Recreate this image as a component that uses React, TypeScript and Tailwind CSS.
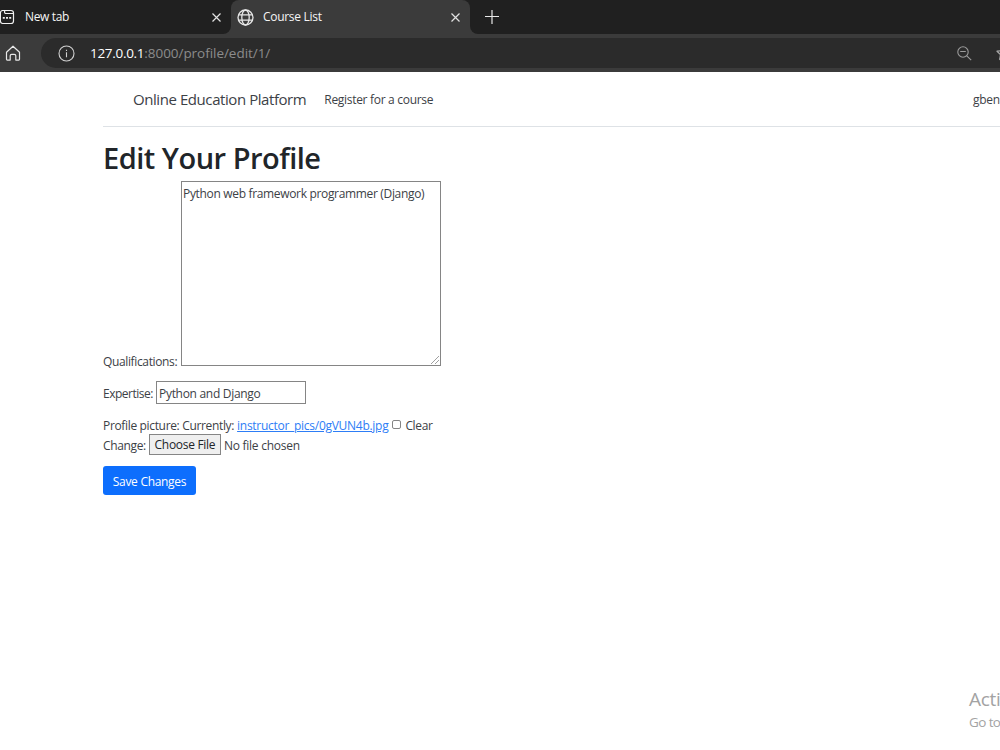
import type { ReactNode } from "react";

// ─── Icons ──────────────────────────────────────────────────────────────────

function NewTabIcon() {
  return (
    <svg className="shrink-0" width="15" height="16" viewBox="0 0 15 16" fill="none" stroke="#f0f0f0" strokeWidth="1.2" aria-hidden="true">
      <path d="M2.5 1.5H11A2.5 2.5 0 0 1 13.5 4v8a2.5 2.5 0 0 1-2.5 2.5H2.5A2.500 2.500 0 0 1 .4 12V4A2.500 2.500 0 0 1 2.500 1.500ZM4.600 1.500v1.800a1.200 1.200 0 0 0 1.200 1.200h7.700" />
      <path d="M2.800 8.800h2M6 8.800h2M9.200 8.800h2" strokeWidth="1.800" />
    </svg>
  );
}

function GlobeIcon() {
  return (
    <svg className="shrink-0" width="17" height="17" viewBox="0 0 17 17" fill="none" stroke="#e6e6e6" strokeWidth="1.3" aria-hidden="true">
      <circle cx="8.5" cy="8.5" r="7.5" />
      <ellipse cx="8.5" cy="8.5" rx="3.7" ry="7.5" />
      <path d="M1.700 5.800h13.600M1.700 11.200h13.600" />
    </svg>
  );
}

function CloseIcon() {
  return (
    <svg width="9" height="9" viewBox="0 0 9 9" fill="none" stroke="#e2e2e2" strokeWidth="1.2" aria-hidden="true">
      <path d="M.5.5l8 8M8.5.5l-8 8" />
    </svg>
  );
}

function PlusIcon() {
  return (
    <svg width="14" height="14" viewBox="0 0 14 14" fill="none" stroke="#e8e8e8" strokeWidth="1.2" aria-hidden="true">
      <path d="M7 0v14M0 6.5h14" />
    </svg>
  );
}

function HomeIcon() {
  return (
    <svg className="shrink-0" width="16" height="17" viewBox="0 0 16 17" fill="none" stroke="#e8e8e8" strokeWidth="1.2" strokeLinejoin="round" aria-hidden="true">
      <path d="M1.500 7.300 8 1.200l6.500 6.100v7a.8.8 0 0 1-.8.8h-2.900v-4.300a1.500 1.500 0 0 0-1.500-1.500H6.700a1.500 1.500 0 0 0-1.500 1.500v4.300H2.300a.8.8 0 0 1-.8-.8Z" />
    </svg>
  );
}

function InfoIcon() {
  return (
    <svg className="shrink-0" width="17" height="17" viewBox="0 0 17 17" fill="none" stroke="#d0d0d0" strokeWidth="1.1" aria-hidden="true">
      <circle cx="8.5" cy="8.5" r="7.5" />
      <path d="M8.500 7.300v5M8.500 4.700v1.300" />
    </svg>
  );
}

function ZoomOutIcon() {
  return (
    <svg width="15" height="15" viewBox="0 0 15 15" fill="none" stroke="#9b9b9b" strokeWidth="1.1" aria-hidden="true">
      <circle cx="6" cy="6" r="5.2" />
      <path d="M3.200 5.500h5.600M9.800 9.800l4.400 4.400" />
    </svg>
  );
}

function StarIcon() {
  return (
    <svg width="16" height="16" viewBox="0 0 16 16" fill="none" stroke="#a8a8a8" strokeWidth="1.2" strokeLinejoin="round" aria-hidden="true">
      <path d="m8 1 2.100 4.500 4.900.7-3.500 3.400.8 4.900L8 12.200l-4.300 2.300.8-4.900L1 6.200l4.900-.7Z" />
    </svg>
  );
}

// ─── Browser chrome ─────────────────────────────────────────────────────────

function TabStrip() {
  return (
    <div className="flex h-[34px] bg-[#3b3b3b] text-[12px] text-[#f5f5f5]">
      <div className="flex w-[231px] shrink-0 items-center rounded-br-lg bg-[#202020] pr-[10px]">
        <NewTabIcon />
        <span className="ml-[10px] tracking-[-0.35px]">New tab</span>
        <span className="ml-auto">
          <CloseIcon />
        </span>
      </div>
      <div className="w-[239px] shrink-0 bg-[#202020]">
        <div className="flex h-full items-center rounded-t-lg bg-[#3b3b3b] pl-[6px] pr-[10px]">
          <GlobeIcon />
          <span className="ml-[9px] tracking-[-0.3px]">Course List</span>
          <span className="ml-auto">
            <CloseIcon />
          </span>
        </div>
      </div>
      <div className="flex grow items-center rounded-bl-lg bg-[#202020] pl-[15px]">
        <PlusIcon />
      </div>
    </div>
  );
}

function AddressBar() {
  return (
    <div className="flex h-[38px] items-center overflow-hidden bg-[#3b3b3b] pl-[5px]">
      <HomeIcon />
      <div className="ml-5 flex h-[30px] w-[959px] shrink-0 items-center rounded-l-full bg-[#2b2b2b] pl-[17px]">
        <InfoIcon />
        <span className="ml-[15px] text-[13.5px] tracking-[-0.04px] text-[#8c8c8c]">
          <span className="tracking-[-0.3px] text-white">127.0.0.1</span>:8000/profile/edit/1/
        </span>
        <span className="ml-auto">
          <ZoomOutIcon />
        </span>
        <span className="ml-6 mr-[-12px]">
          <StarIcon />
        </span>
      </div>
    </div>
  );
}

// ─── Page ───────────────────────────────────────────────────────────────────

function SiteNav() {
  return (
    <nav className="flex h-[55px] items-center border-b border-[#dee2e6] pl-[30px] text-[#3c4146]">
      <a href="#" className="text-[15px] tracking-[-0.43px]">
        Online Education Platform
      </a>
      <a href="#" className="ml-[18px] pt-[2px] text-[12px] tracking-[-0.3px]">
        Register for a course
      </a>
      <span className="ml-auto w-[27px] pt-[2px] text-[12px] tracking-[-0.3px]">gben</span>
    </nav>
  );
}

function Row({ label, children }: Readonly<{ label: ReactNode; children: ReactNode }>) {
  return (
    <div className="flex items-end">
      {label}
      {children}
    </div>
  );
}

function ProfileForm() {
  return (
    <form className="text-[12px] leading-[18px] text-[#3c4146]">
      <div className="mt-[5px]">
        <Row
          label={
            <label htmlFor="qualifications" className="mb-[-5px] w-[78px] tracking-[-0.36px]">
              Qualifications:
            </label>
          }
        >
          <div className="relative">
            <textarea
              id="qualifications"
              className="block h-[185px] w-[260px] resize-none border border-[#858585] px-px pt-[3px] tracking-[-0.33px]"
              defaultValue="Python web framework programmer (Django)"
            />
            {/* Resize grip */}
            <svg className="absolute bottom-[2px] right-[2px]" width="8" height="8" viewBox="0 0 8 8" stroke="#a0a0a0" aria-hidden="true">
              <path d="M0 8 8 0M4 8 8 4" />
            </svg>
          </div>
        </Row>
      </div>
      <div className="mt-[15px]">
        <Row
          label={
            <label htmlFor="expertise" className="mb-px w-[52px] tracking-[-0.5px]">
              Expertise:
            </label>
          }
        >
          <input
            id="expertise"
            type="text"
            className="ml-px h-[23px] w-[150px] border border-[#858585] px-[2px] pt-[2px] tracking-[-0.3px]"
            defaultValue="Python and Django"
          />
        </Row>
      </div>
      <div className="mt-3 flex items-center pt-px">
        <span className="tracking-[-0.34px]">Profile picture: Currently:</span>
        <a href="#" className="ml-[3px] tracking-[-0.28px] text-[#2d7df6] underline">
          instructor_pics/0gVUN4b.jpg
        </a>
        <input
          type="checkbox"
          className="mb-[3px] ml-[4px] size-[9px] appearance-none rounded-[2px] border border-[#858585]"
        />
        <span className="ml-1 tracking-[-0.35px]">Clear</span>
      </div>
      <div className="mt-[-1px] flex">
        <span className="pt-[3px] tracking-[-0.35px]">Change:</span>
        <button type="button" className="ml-[3px] h-[21px] w-[72px] border border-[#858585] bg-[#efefef] tracking-[-0.3px] text-[#212529]">
          Choose File
        </button>
        <span className="ml-[3px] pt-[3px] tracking-[-0.25px]">No file chosen</span>
      </div>
      <button type="button" className="mt-[11px] h-[29px] w-[93px] rounded-[3px] bg-[#0d6efd] pt-[3px] tracking-[-0.3px] text-white">
        Save Changes
      </button>
    </form>
  );
}

export default function App() {
  return (
    <div className="flex h-[750px] w-[1000px] flex-col overflow-hidden whitespace-nowrap bg-white font-['Open_Sans',sans-serif]">
      <TabStrip />
      <AddressBar />
      <main className="pl-[103px]">
        <SiteNav />
        <h1 className="mt-[13px] text-[29px] font-semibold leading-9 tracking-[-0.5px] text-[#212529]">
          Edit Your Profile
        </h1>
        <ProfileForm />
      </main>
      <footer className="mb-[18px] ml-auto mt-auto w-[31px] text-[#a3a3a3]">
        <p className="text-[19px] leading-[25px] tracking-[-0.3px]">Acti</p>
        <p className="text-[13.5px] leading-5 tracking-[-0.6px]">Go to</p>
      </footer>
    </div>
  );
}
